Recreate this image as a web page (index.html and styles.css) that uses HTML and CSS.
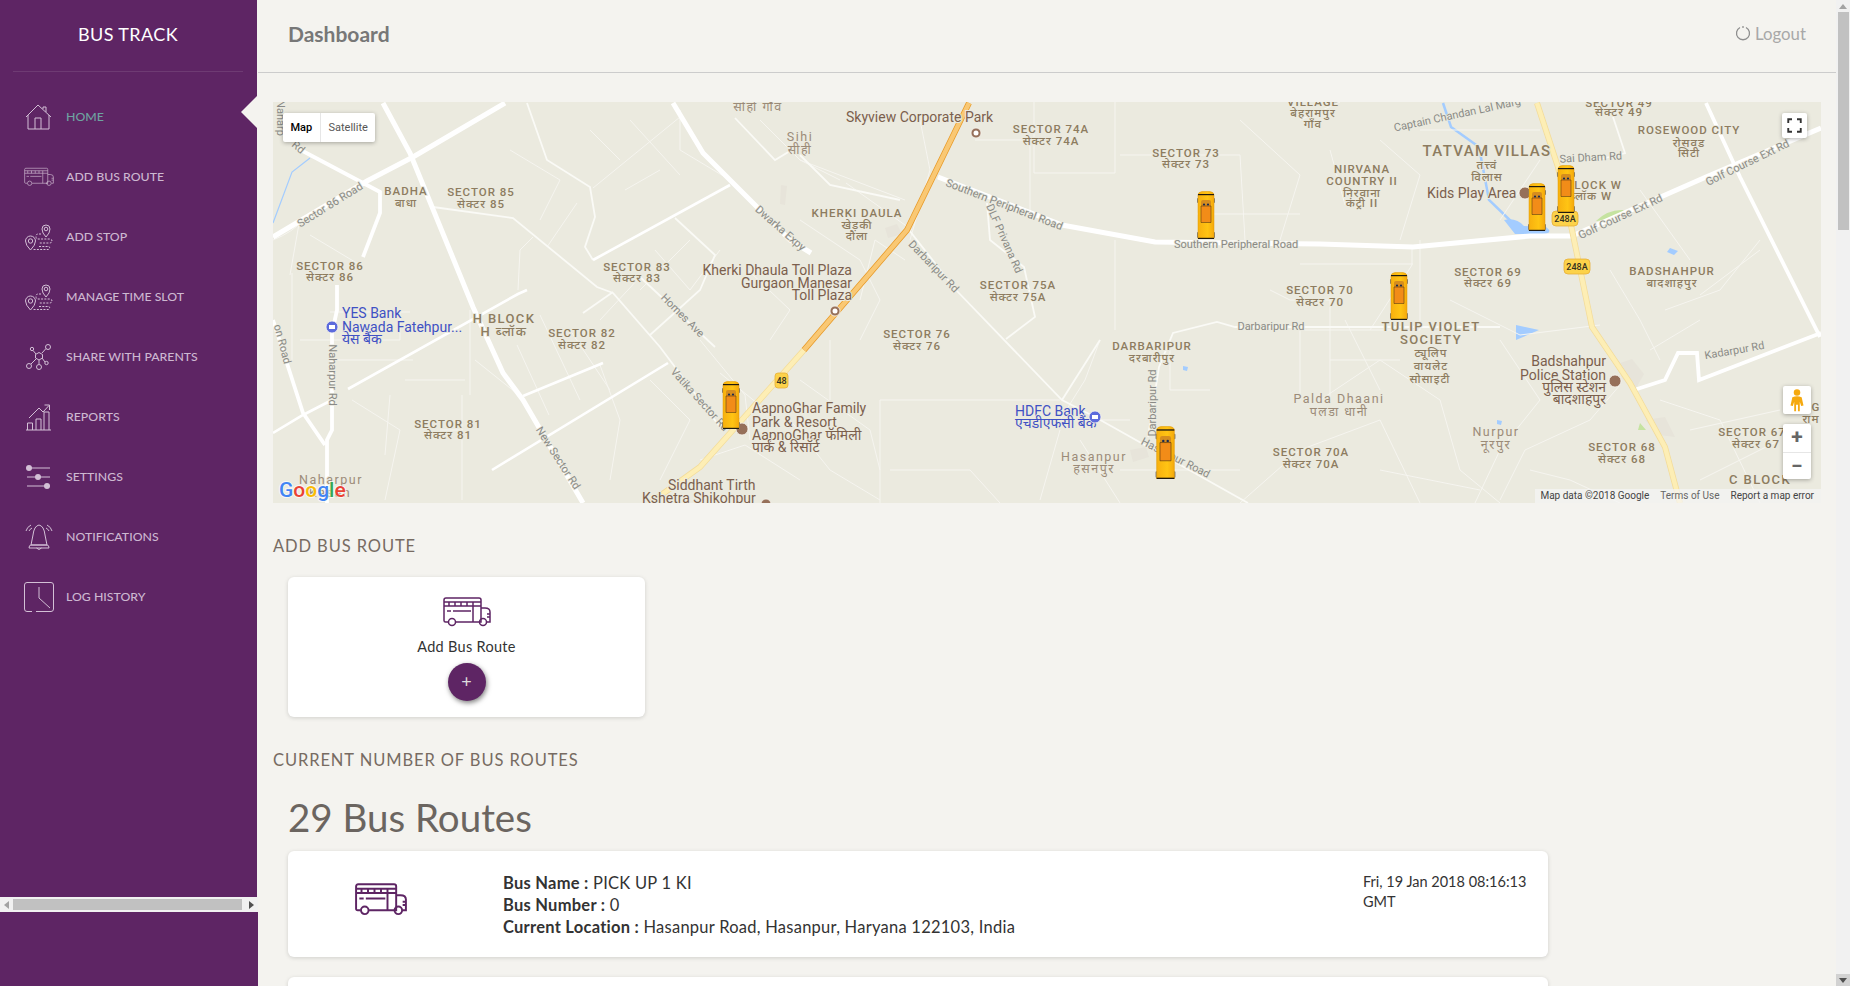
FILE: index.html
```html
<!DOCTYPE html>
<html>
	<head>
		<meta charset="utf-8">
		<title>Bus Track</title>
		<link rel="stylesheet" href="styles.css">
	</head>
	<body>
		<svg class="defs" width="0" height="0">
			<defs>
				<linearGradient id="bus-paint" x1="0" x2="1" y1="0" y2="0">
					<stop offset="0" stop-color="#f7b00f"/>
					<stop offset="0.6" stop-color="#ffc413"/>
					<stop offset="1" stop-color="#f5a90c"/>
				</linearGradient>
			</defs>
			<symbol id="ic-home" viewBox="0 0 30 30"><path d="M2 15 14 3l13 12M19 7V5h3v5M4 13v14h21V13M11 27V16h6v11"/></symbol>
			<symbol id="ic-bus" viewBox="0 0 48 30"><path d="M5 25H2.500Q1 25 1 23.500V3Q1 1 3 1h33q2 0 2 2v22H13M38 11h4q5 0 5 4v10h-3M35 25H38M1 5h37M6 5v4M12 5v4M18 5v4M24 5v4M30 5v4M1 9h37M4 14h4M10 14h18M30 9v16M44 17h3M44 20h3"/><circle cx="9" cy="25" r="3.500"/><circle cx="40" cy="25" r="3.500"/></symbol>
			<symbol id="ic-stop" viewBox="0 0 30 30"><path d="M22 15q-4-4-4-8a4 4 0 0 1 8 0q0 4-4 8zM6.500 28q-5-5-5-9a5 5 0 0 1 10 0q0 4-5 9z"/><circle cx="22" cy="7" r="1.800"/><circle cx="6.500" cy="19" r="2.200"/><path class="dash" d="M17 12h-3q-2 0-2 2.500t2 2.500h11q3 0 3 2t-3 2h-10M15 24.500h10q1.500 1-.5 3H9"/></symbol>
			<symbol id="ic-net" viewBox="0 0 30 30"><path d="M12 12 9 8.500M18 11l4-4.500M12 17l-5 5M15 18v4M18 16l3 4"/><path d="m15 10.500 3.500 2v3.500l-3.500 2-3.500-2v-3.500z"/><circle cx="24" cy="5" r="2.500"/><circle cx="5" cy="24" r="2.500"/><circle cx="15" cy="25" r="2.500"/><circle cx="8" cy="7" r="1.700"/><circle cx="22.500" cy="21" r="1.700"/></symbol>
			<symbol id="ic-chart" viewBox="0 0 30 30"><path d="M2 28h25M3.500 28v-7h5v7M12 28V17h5v11M20 28V10h5v18M5 16 15 6l4 4 6-6.500M20.500 3h5v5"/></symbol>
			<symbol id="ic-sliders" viewBox="0 0 30 30"><path d="M3 6h23M3 15h23M3 24h23"/><circle class="solid" cx="5" cy="6" r="3"/><circle class="solid" cx="14" cy="15" r="3"/><circle class="solid" cx="23" cy="24" r="3"/></symbol>
			<symbol id="ic-bell" viewBox="0 0 30 30"><path d="M15 3q-5 1-6 10l-2 10h16l-2-10q-1-9-6-10zM5 26q0-3 2-3h16q2 0 2 3zM12.500 26q2.500 3 5 0M2 9q1-4 5-6M5 9q1-2 3-3M28 9q-1-4-5-6M25 9q-1-2-3-3"/></symbol>
			<symbol id="ic-clock" viewBox="0 0 30 30"><path d="M8 29.500H3Q.5 29.500.5 27V3Q.5.5 3 .5h24q2.500 0 2.500 2.500v24q0 2.500-2.500 2.500H12M15 5v11l11 10"/></symbol>
			<symbol id="map-bus" viewBox="0 0 18 48">
				<rect class="b-wheel" x="0" y="7" width="18" height="5" rx="1"/>
				<rect class="b-wheel" x="0" y="41" width="18" height="6" rx="1"/>
				<path class="b-body" d="M1 4Q1 1 5 .5h8q4 .5 4 3.500v44H1z"/>
				<rect class="b-dark" x="1" y="3" width="16" height="1.200"/>
				<rect class="b-dark" x="1" y="46.800" width="16" height="1.200"/>
				<path class="b-cab" d="M4 11q0-2 2-2h6q2 0 2 2v6H4z"/>
				<path class="b-door" d="M4 15h10v16.500H4z"/>
				<circle class="b-eye" cx="7" cy="13.500" r="1.100"/>
				<circle class="b-eye" cx="11" cy="13.500" r="1.100"/>
			</symbol>
		</svg>

		<div class="app">
			<aside class="sidebar">
				<div class="sidebar-nav">
					<div class="brand">BUS TRACK</div>
					<ul class="nav">
						<li class="nav-item active"><svg class="nav-icon"><use href="#ic-home"/></svg><span>HOME</span></li>
						<li class="nav-item"><svg class="nav-icon"><use href="#ic-bus"/></svg><span>ADD BUS ROUTE</span></li>
						<li class="nav-item"><svg class="nav-icon"><use href="#ic-stop"/></svg><span>ADD STOP</span></li>
						<li class="nav-item"><svg class="nav-icon"><use href="#ic-stop"/></svg><span>MANAGE TIME SLOT</span></li>
						<li class="nav-item"><svg class="nav-icon"><use href="#ic-net"/></svg><span>SHARE WITH PARENTS</span></li>
						<li class="nav-item"><svg class="nav-icon"><use href="#ic-chart"/></svg><span>REPORTS</span></li>
						<li class="nav-item"><svg class="nav-icon"><use href="#ic-sliders"/></svg><span>SETTINGS</span></li>
						<li class="nav-item"><svg class="nav-icon"><use href="#ic-bell"/></svg><span>NOTIFICATIONS</span></li>
						<li class="nav-item"><svg class="nav-icon"><use href="#ic-clock"/></svg><span>LOG HISTORY</span></li>
					</ul>
				</div>
				<div class="hbar">
					<span class="hbar-btn"><i class="arr-left"></i></span>
					<span class="hbar-thumb"></span>
					<span class="hbar-btn"><i class="arr-right"></i></span>
				</div>
			</aside>

			<main class="main">
				<header class="topbar">
					<div class="page-title">Dashboard</div>
					<div class="logout">
						<svg class="logout-icon" viewBox="0 0 16 16"><path d="M5 2.500a6.500 6.500 0 1 0 6 0M8 1v2"/></svg>
						<span>Logout</span>
					</div>
				</header>

				<div class="content">
					<div class="map">
						<svg class="map-canvas" viewBox="273 102 1548 401">
							<!-- water and parks -->
							<path class="water" d="M310 158 292 172 273 223"/>
							<path class="water wide" d="M1443 103 1451 127 1479 147 1489 200 1517 227"/>
							<path class="lake" d="M1504 220q12-3 20 6l22 1q8 6-3 7h-28zM1516 325l23 5-23 10zM1670 248l8 3-4 4-7-3zM1497 420l5 1-1 4-4-1zM1183 366l5 1-1 4-4-1z"/>
							<path class="park" d="M1596 221q12-12 28-11l-10 9zM1640 423l6 7h-8z"/>
							<path class="urban" d="M1617 364l15-5 12 15-10 18-12-14zM1645 420l20-3 10 20-16-2zM781 185l6 1-2 19-5-1zM885 228l12-4 5 10-14 4zM1130 450l16-3 3 10-16 5z"/>

							<!-- thin roads -->
							<g class="road-thin">
								<path d="M593 188 680 117M547 247 577 203M518 290 520 250 533 237M273 240q20-8 30-20M300 218 290 275M310 235 360 265M292 273 292 360M300 340 400 340 400 310M333 360h80M405 380h60M330 312 410 312M352 400 400 430 385 500M390 395l-5 60M440 430h20M462 395V500M470 310V395M520 396 475 360M517 345l32 70M540 315l40 85M570 330l40 60M600 365 620 420 610 480M650 380 690 420 660 480M700 340 745 395 750 440M720 373 768 412M640 277 600 320M690 240 640 290M655 250 690 290 720 250M748 270 790 310 770 340M700 460 745 445 800 480M510 150 560 180 540 220M590 130 620 160M630 120 680 175M625 190 660 170M680 110 680 150 730 180M760 120 800 160 840 180M800 160 905 200M846 183 912 230M800 220 860 260 880 300 860 340M905 260 875 240 860 300M920 120 930 170 910 240M975 140H1030V220M1034 102V173H1115V102M1115 240V330M1120 155H1240L1245 240M1240 120 1300 175 1280 240M1197 214H1300M1300 120 1340 102M1330 150 1345 205M1380 140 1420 175 1400 240M1420 130H1540M1540 160 1500 220M1420 240V330H1300V400M1300 264H1413M1412 245V265L1370 330M1320 400 1380 360 1440 400 1460 470 1500 503M1450 300 1520 335 1600 325M1500 340 1540 400 1500 450 1475 503M1500 500 1525 450 1590 420 1620 385M1640 190 1690 260M1610 270 1640 320 1660 360M1665 310 1720 290 1760 240M1700 295 1760 250M1650 350 1700 320M1660 400 1720 420 1760 503M1690 430 1780 410M1620 503 1570 480 1530 470M1700 480 1780 440M1380 470 1480 490M1240 503 1300 450 1380 420 1420 503M1270 290 1290 300H1330V400M1330 360H1400M1345 320 1380 390M1170 350V390H1210M1100 340 1085 380 1060 420M1040 420H1130M920 400H1060M880 400V503M880 400H920M890 470H970L1000 503M1060 430 1040 500M1080 440 1120 503M1120 470H1240M800 380 870 430 880 470M790 420 830 470 880 500M830 340V400"/>
							</g>

							<!-- medium roads -->
							<g class="road-mid">
								<path d="M433 207 513 218 597 287 613 293 660 347 720 427M527 103 547 160 590 187 595 217 585 247 593 260M583 313 613 292M640 277 715 347M675 218 715 255 700 290 650 335M987 203 990 240 1024 267 1035 317 1006 339M909 230 956 290 1062 400 1095 417 1248 503M1148 437 1159 367 1173 333 1217 322 1235 327 1320 327M1062 400 1100 340M1613 117 1625 153 1597 160M1300 327H1500M800 155 830 185 900 200M735 118 775 160 795 148"/>
							</g>

							<!-- main roads -->
							<g class="road-main">
								<path d="M273 237 367 181 413 157 505 103"/>
								<path d="M383 103 410 153 473 307 503 373 523 400 583 503"/>
								<path class="w4" d="M297 148 380 192V213L363 257"/>
								<path class="w4" d="M337 285V310L332 333V430L327 440V503"/>
								<path class="w4" d="M273 320 303 413 325 445"/>
								<path class="w3" d="M273 433 303 415 332 400"/>
								<path class="w3" d="M348 389 518 294 527 290"/>
								<path class="w3" d="M523 396 603 363"/>
								<path class="w3" d="M492 470 668 363"/>
								<path d="M673 103 703 153 753 203 790 240 811 253"/>
								<path class="w3" d="M593 260 730 185"/>
								<path d="M938 177 1062 225 1155 242 1320 244 1413 247 1530 236 1572 236 1706 177 1821 128"/>
								<path class="w4" d="M1706 103 1740 177 1820 337"/>
								<path class="w4" d="M1821 333 1699 380 1697 353H1678L1665 380 1634 390"/>
							</g>

							<!-- highways -->
							<path class="hw-edge" d="M650 503 700 467 804 350"/>
							<path class="hw" d="M650 503 700 467 804 350"/>
							<path class="toll-edge" d="M804 350 907 230 969 103"/>
							<path class="toll" d="M804 350 907 230 969 103"/>
							<path class="hw-edge" d="M1537 103 1558 167 1572 230 1592 327 1630 383 1665 447 1680 503"/>
							<path class="hw" d="M1537 103 1558 167 1572 230 1592 327 1630 383 1665 447 1680 503"/>

							<!-- road names -->
							<g class="t-road">
								<text x="778" y="231" transform="rotate(41 778 231)">Dwarka Expy</text>
								<text x="680" y="318" transform="rotate(45 680 318)">Homes Ave</text>
								<text x="697" y="402" transform="rotate(48 697 402)">Vatika Sector Rd</text>
								<text x="555" y="460" transform="rotate(57 555 460)">New Sector Rd</text>
								<text x="332" y="208" transform="rotate(-32 332 208)">Sector 86 Road</text>
								<text x="329" y="375" transform="rotate(90 329 375)">Naharpur Rd</text>
								<text x="277" y="118" transform="rotate(90 277 118)">Naharp</text>
								<text x="296" y="150" transform="rotate(40 296 150)">Rd</text>
								<text x="279" y="345" transform="rotate(75 279 345)">on Road</text>
								<text x="1003" y="208" transform="rotate(21 1003 208)">Southern Peripheral Road</text>
								<text x="1001" y="240" transform="rotate(66 1001 240)">DLF Privana Rd</text>
								<text x="931" y="269" transform="rotate(46 931 269)">Darbaripur Rd</text>
								<text x="1236" y="248">Southern Peripheral Road</text>
								<text x="1271" y="330">Darbaripur Rd</text>
								<text x="1156" y="403" transform="rotate(-90 1156 403)">Darbaripur Rd</text>
								<text x="1174" y="461" transform="rotate(27 1174 461)">Hasanpur Road</text>
								<text x="1458" y="118" transform="rotate(-12 1458 118)">Captain Chandan Lal Marg</text>
								<text x="1591" y="161" transform="rotate(-3 1591 161)">Sai Dham Rd</text>
								<text x="1622" y="220" transform="rotate(-25 1622 220)">Golf Course Ext Rd</text>
								<text x="1749" y="166" transform="rotate(-26 1749 166)">Golf Course Ext Rd</text>
								<text x="1735" y="354" transform="rotate(-10 1735 354)">Kadarpur Rd</text>
							</g>

							<!-- areas -->
							<g class="t-area">
								<text x="406" y="195">BADHA</text><text x="406" y="207">बाधा</text>
								<text x="481" y="196">SECTOR 85</text><text x="481" y="208">सेक्टर 85</text>
								<text x="330" y="270">SECTOR 86</text><text x="330" y="281">सेक्टर 86</text>
								<text class="mid" x="504" y="323">H BLOCK</text><text class="mid" x="504" y="336">H ब्लॉक</text>
								<text x="582" y="337">SECTOR 82</text><text x="582" y="349">सेक्टर 82</text>
								<text x="637" y="271">SECTOR 83</text><text x="637" y="282">सेक्टर 83</text>
								<text x="448" y="428">SECTOR 81</text><text x="448" y="439">सेक्टर 81</text>
								<text x="1051" y="133">SECTOR 74A</text><text x="1051" y="145">सेक्टर 74A</text>
								<text x="1186" y="157">SECTOR 73</text><text x="1186" y="168">सेक्टर 73</text>
								<text x="857" y="217">KHERKI DAULA</text><text x="857" y="229">खेड़की</text><text x="857" y="240">दौला</text>
								<text x="1018" y="289">SECTOR 75A</text><text x="1018" y="301">सेक्टर 75A</text>
								<text x="917" y="338">SECTOR 76</text><text x="917" y="350">सेक्टर 76</text>
								<text x="1152" y="350">DARBARIPUR</text><text x="1152" y="362">दरबारीपुर</text>
								<text x="1320" y="294">SECTOR 70</text><text x="1320" y="306">सेक्टर 70</text>
								<text x="1311" y="456">SECTOR 70A</text><text x="1311" y="468">सेक्टर 70A</text>
								<text x="1313" y="106">VILLAGE</text><text x="1313" y="117">बेहरामपुर</text><text x="1313" y="128">गाँव</text>
								<text x="1619" y="107">SECTOR 49</text><text x="1619" y="116">सेक्टर 49</text>
								<text x="1689" y="134">ROSEWOOD CITY</text><text x="1689" y="147">रोसवड</text><text x="1689" y="157">सिटी</text>
								<text class="big" x="1487" y="156">TATVAM VILLAS</text><text x="1487" y="169">तत्त्वं</text><text x="1487" y="181">विलास</text>
								<text x="1362" y="173">NIRVANA</text><text x="1362" y="185">COUNTRY II</text><text x="1362" y="197">निरवाना</text><text x="1362" y="207">कंट्री II</text>
								<text x="1594" y="189">BLOCK W</text><text x="1591" y="200">ब्लॉक W</text>
								<text x="1488" y="276">SECTOR 69</text><text x="1488" y="287">सेक्टर 69</text>
								<text x="1672" y="275">BADSHAHPUR</text><text x="1672" y="287">बादशाहपुर</text>
								<text class="mid" x="1431" y="331">TULIP VIOLET</text><text class="mid" x="1431" y="344">SOCIETY</text><text x="1431" y="357">ट्यूलिप</text><text x="1431" y="370">वायलेट</text><text x="1430" y="383">सोसाइटी</text>
								<text x="1622" y="451">SECTOR 68</text><text x="1622" y="463">सेक्टर 68</text>
								<text x="1752" y="436">SECTOR 67</text><text x="1756" y="448">सेक्टर 67</text>
								<text class="mid" x="1760" y="484">C BLOCK</text>
							</g>

							<!-- villages -->
							<g class="t-village">
								<text x="800" y="141">Sihi</text><text x="800" y="154">सीही</text>
								<text x="758" y="111">सोहों गाँव</text>
								<text x="331" y="484">Naharpur</text><text x="330" y="497">Kasan</text>
								<text x="1094" y="461">Hasanpur</text><text x="1094" y="473">हसनपुर</text>
								<text x="1339" y="403">Palda Dhaani</text><text x="1339" y="416">पलडा धानी</text>
								<text x="1496" y="436">Nurpur</text><text x="1496" y="449">नूरपुर</text>
							</g>

							<!-- places -->
							<g class="t-poi">
								<text x="846" y="122">Skyview Corporate Park</text>
								<text class="end" x="852" y="275">Kherki Dhaula Toll Plaza</text>
								<text class="end" x="852" y="288">Gurgaon Manesar</text>
								<text class="end" x="852" y="300">Toll Plaza</text>
								<text x="752" y="413">AapnoGhar Family</text>
								<text x="752" y="427">Park &amp; Resort</text>
								<text x="752" y="440">AapnoGhar फॅमिली</text>
								<text x="752" y="452">पार्क &amp; रिसॉर्ट</text>
								<text x="668" y="490">Siddhant Tirth</text>
								<text x="642" y="503">Kshetra Shikohpur</text>
								<text x="1427" y="198">Kids Play Area</text>
								<text class="end" x="1606" y="366">Badshahpur</text>
								<text class="end" x="1606" y="380">Police Station</text>
								<text class="end" x="1606" y="392">पुलिस स्टेशन</text>
								<text class="end" x="1606" y="404">बादशाहपुर</text>
							</g>
							<g class="t-bank">
								<text x="342" y="318">YES Bank</text>
								<text x="342" y="332">Nawada Fatehpur...</text>
								<text x="342" y="344">येस बैंक</text>
								<text x="1015" y="416">HDFC Bank</text>
								<text x="1015" y="428">एचडीएफसी बैंक</text>
							</g>
							<text class="t-area" x="1816" y="411">G</text>
							<text class="t-area" x="1811" y="423">राम</text>

							<!-- markers -->
							<g class="poi"><circle cx="976" cy="133" r="5"/><circle class="hole" cx="976" cy="133" r="2.500"/><circle cx="835" cy="311" r="5"/><circle class="hole" cx="835" cy="311" r="2.500"/><circle cx="742" cy="429" r="6"/><circle cx="766" cy="504" r="5"/><circle cx="1525" cy="193" r="6"/><circle cx="1615" cy="381" r="6"/></g>
							<g class="bank"><circle cx="332" cy="327" r="6"/><rect class="hole" x="329" y="325" width="6" height="4"/><circle cx="1095" cy="417" r="6"/><rect class="hole" x="1092" y="415" width="6" height="4"/></g>
							<g class="shield">
								<rect x="775" y="373" width="13" height="15" rx="3"/><text x="781.500" y="384">48</text>
								<rect x="1552" y="211" width="26" height="15" rx="4"/><text x="1565" y="222">248A</text>
								<rect x="1564" y="259" width="26" height="15" rx="4"/><text x="1577" y="270">248A</text>
							</g>

							<!-- buses -->
							<use href="#map-bus" x="722" y="381" width="18" height="48"/>
							<use href="#map-bus" x="1197" y="191" width="18" height="48"/>
							<use href="#map-bus" x="1155" y="426" width="21" height="53"/>
							<use href="#map-bus" x="1390" y="272" width="18" height="48"/>
							<use href="#map-bus" x="1528" y="183" width="18" height="48"/>
							<use href="#map-bus" x="1557" y="165" width="18" height="48"/>

							<text class="g-logo" x="279" y="497"><tspan class="g-b">G</tspan><tspan class="g-r">o</tspan><tspan class="g-y">o</tspan><tspan class="g-b">g</tspan><tspan class="g-g">l</tspan><tspan class="g-r">e</tspan></text>
						</svg>

						<div class="map-type">
							<span class="map-type-on">Map</span>
							<span>Satellite</span>
						</div>
						<div class="map-btn map-full">
							<svg viewBox="0 0 24 24"><path d="M2 8V2h6M16 2h6v6M22 16v6h-6M8 22H2v-6"/></svg>
						</div>
						<div class="map-btn map-peg">
							<svg viewBox="0 0 28 28"><circle cx="14" cy="6" r="3.500"/><path d="M9 11q5-2 10 0l2 9-2.500.5L17 16v10h-2v-7h-2v7h-2V16l-1.500 4.500L7 20z"/></svg>
						</div>
						<div class="map-zoom">
							<div class="zoom-btn">+</div>
							<div class="zoom-btn">−</div>
						</div>
						<div class="map-foot">
							<span>Map data ©2018 Google</span>
							<span class="foot-link">Terms of Use</span>
							<span>Report a map error</span>
						</div>
					</div>

					<h2 class="sec-title add-title">ADD BUS ROUTE</h2>
					<div class="add-card">
						<svg class="bus-icon"><use href="#ic-bus"/></svg>
						<div class="add-label">Add Bus Route</div>
						<div class="add-btn">+</div>
					</div>

					<h2 class="sec-title count-title">CURRENT NUMBER OF BUS ROUTES</h2>
					<div class="count">29 Bus Routes</div>

					<div class="route-list">
						<div class="route-card">
							<svg class="route-icon"><use href="#ic-bus"/></svg>
							<div class="route-info">
								<div><b>Bus Name :</b> PICK UP 1 KI</div>
								<div><b>Bus Number :</b> 0</div>
								<div><b>Current Location :</b> Hasanpur Road, Hasanpur, Haryana 122103, India</div>
							</div>
							<div class="route-date">Fri, 19 Jan 2018 08:16:13 GMT</div>
						</div>
						<div class="route-card"></div>
					</div>
				</div>
			</main>

			<div class="vbar">
				<span class="vbar-btn"><i class="arr-up"></i></span>
				<span class="vbar-thumb"></span>
				<span class="vbar-btn vbar-down"><i class="arr-down"></i></span>
			</div>
		</div>
	</body>
</html>
```

FILE: styles.css
```css
*{
	padding: 0;
	margin: 0;
	box-sizing: border-box;
}
html,body{
	height: 100%;
	overflow: hidden;
}
body{
	font-family: "Lato", "Noto Sans", sans-serif;
	background-color: #f4f3ef;
	color: #333;
}
.defs{
	position: absolute;
}
.app{
	display: flex;
	height: 100vh;
}

/* sidebar */
.sidebar{
	display: flex;
	flex-direction: column;
	flex: 0 0 258px;
	padding-bottom: 74px;
	background-color: #5e2564;
}
.sidebar-nav{
	flex: 1;
	border-right: 1px solid #f4f3ef;
}
.brand{
	width: 230px;
	height: 72px;
	margin-left: 13px;
	border-bottom: 1px solid rgba(255,255,255,0.1);
	color: #fff;
	font-size: 18px;
	letter-spacing: 0.4px;
	line-height: 68px;
	text-align: center;
}
.nav{
	list-style-type: none;
	padding-top: 15px;
}
.nav-item{
	position: relative;
	display: flex;
	align-items: center;
	gap: 12px;
	height: 60px;
	padding-left: 24px;
	color: #cdb8d1;
	font-size: 12.300px;
	font-weight: 500;
}
.nav-item span{
	margin-bottom: 2px;
}
.nav-item.active{
	color: #6ea3a1;
}
.nav-item.active:after{
	content: "";
	position: absolute;
	right: 0;
	top: 9px;
	border-style: solid;
	border-width: 16px 16px 16px 0;
	border-color: transparent #f4f3ef transparent transparent;
}
.nav-icon{
	flex: none;
	width: 30px;
	height: 30px;
	fill: none;
	stroke: #d3c0d6;
	stroke-width: 1;
}
.dash{
	stroke-dasharray: 2 1.3;
}
.solid{
	fill: #d3c0d6;
	stroke: none;
}

/* scrollbars */
.hbar{
	display: flex;
	align-items: center;
	height: 15px;
	background-color: #f1f1f1;
}
.hbar-btn{
	display: flex;
	align-items: center;
	justify-content: center;
	flex: 0 0 13px;
	height: 15px;
}
.hbar-thumb{
	flex: 1;
	height: 11px;
	margin-right: 3px;
	background-color: #c1c1c1;
}
.vbar{
	display: flex;
	flex-direction: column;
	flex: 0 0 14px;
	background-color: #f1f1f1;
}
.vbar-btn{
	display: flex;
	align-items: center;
	justify-content: center;
	height: 12px;
}
.vbar-thumb{
	height: 218px;
	margin: 0 1px 0 2px;
	background-color: #c1c1c1;
}
.vbar-down{
	margin-top: auto;
	background-color: #d2d2d2;
}
.arr-left,
.arr-right,
.arr-up,
.arr-down{
	display: block;
	border-style: solid;
	border-color: transparent;
}
.arr-left{
	border-width: 4px 5px 4px 0;
	border-right-color: #a3a3a3;
}
.arr-right{
	border-width: 4px 0 4px 5px;
	border-left-color: #505050;
}
.arr-up{
	border-width: 0 4px 5px 4px;
	border-bottom-color: #a3a3a3;
}
.arr-down{
	border-width: 5px 4px 0 4px;
	border-top-color: #505050;
}

/* main column */
.main{
	flex: 1;
	min-width: 0;
	height: 100vh;
	overflow: hidden;
}
.topbar{
	display: flex;
	align-items: center;
	justify-content: space-between;
	height: 73px;
	padding: 0 30px 6px 30px;
	border-bottom: 1px solid #ccc;
}
.page-title{
	font-size: 21px;
	font-weight: 700;
	color: #777;
}
.logout{
	display: flex;
	align-items: center;
	gap: 4px;
	font-size: 16.800px;
	color: #a8a8a8;
}
.logout-icon{
	width: 16px;
	height: 16px;
	fill: none;
	stroke: #8f8f8f;
	stroke-width: 1.300;
}
.content{
	padding: 29px 15px 0;
}

/* map */
.map{
	position: relative;
	height: 401px;
	overflow: hidden;
	background-color: #ebeadf;
}
.map-canvas{
	display: block;
	width: 100%;
	height: 100%;
	font-family: "Roboto", "Noto Sans", sans-serif;
}
.water{
	fill: none;
	stroke: #a3ccff;
	stroke-width: 1.200;
}
.water.wide{
	stroke-width: 2.500;
}
.lake{
	fill: #a3ccff;
}
.park{
	fill: #c5e3a0;
}
.urban{
	fill: #e7e4da;
}
.road-thin path{
	fill: none;
	stroke: #f6f5f0;
	stroke-width: 1;
}
.road-mid path{
	fill: none;
	stroke: #fafaf6;
	stroke-width: 1.800;
}
.road-main path{
	fill: none;
	stroke: #fff;
	stroke-width: 5;
}
.road-main .w4{
	stroke-width: 3.800;
}
.road-main .w3{
	stroke-width: 2.600;
}
.hw-edge{
	fill: none;
	stroke: #f3dc9a;
	stroke-width: 6;
}
.hw{
	fill: none;
	stroke: #fdeeb5;
	stroke-width: 4.500;
}
.toll-edge{
	fill: none;
	stroke: #e89a27;
	stroke-width: 6;
}
.toll{
	fill: none;
	stroke: #f9c874;
	stroke-width: 4.500;
}
.t-road text{
	font-size: 11px;
	fill: #8a8a86;
	text-anchor: middle;
	paint-order: stroke;
	stroke: #ebeadf;
	stroke-width: 1.500;
}
.t-area,
.t-area text{
	font-size: 11.500px;
	font-weight: 500;
	letter-spacing: 1px;
	fill: #8d7c60;
	text-anchor: middle;
	paint-order: stroke;
	stroke: #ebeadf;
	stroke-width: 2;
}
.t-area .mid{
	font-size: 13px;
	letter-spacing: 1.400px;
}
.t-area .big{
	font-size: 15px;
	letter-spacing: 1.300px;
}
.t-village text{
	font-size: 12.500px;
	letter-spacing: 1.500px;
	fill: #9b8b78;
	text-anchor: middle;
	paint-order: stroke;
	stroke: #ebeadf;
	stroke-width: 2;
}
.t-poi text{
	font-size: 14px;
	fill: #7b5f4d;
	paint-order: stroke;
	stroke: #ebeadf;
	stroke-width: 2;
}
.t-poi .end{
	text-anchor: end;
}
.t-bank text{
	font-size: 14px;
	fill: #3f51c4;
	paint-order: stroke;
	stroke: #ebeadf;
	stroke-width: 2;
}
.poi circle{
	fill: #96705a;
	stroke: #f7f5ef;
	stroke-width: 0.800;
}
.bank circle{
	fill: #5c6bdc;
	stroke: #f7f5ef;
	stroke-width: 0.800;
}
.poi .hole,
.bank .hole{
	fill: #fff;
	stroke: none;
}
.shield rect{
	fill: #fcd24a;
	stroke: #e7b03a;
	stroke-width: 0.800;
}
.shield text{
	font-size: 9px;
	font-weight: 500;
	fill: #33301f;
	text-anchor: middle;
}
.b-wheel{
	fill: #777;
}
.b-body{
	fill: url(#bus-paint);
	stroke: #e09a00;
	stroke-width: 0.500;
}
.b-dark{
	fill: #1f1a10;
}
.b-cab{
	fill: #d68d1e;
}
.b-door{
	fill: #f28c18;
	stroke: #3c2a10;
	stroke-width: 0.500;
}
.b-eye{
	fill: #1a2a55;
}
.g-logo{
	font-size: 21px;
	font-weight: 500;
	paint-order: stroke;
	stroke: rgba(255,255,255,0.7);
	stroke-width: 2;
}
.g-b{ fill: #4285f4; }
.g-r{ fill: #ea4335; }
.g-y{ fill: #fbbc05; }
.g-g{ fill: #34a853; }

.map-type{
	position: absolute;
	left: 10px;
	top: 11px;
	display: flex;
	height: 29px;
	background-color: #fff;
	border-radius: 2px;
	box-shadow: 0 1px 4px rgba(0,0,0,0.3);
	font-family: "Roboto", sans-serif;
	font-size: 11px;
	line-height: 29px;
	color: #565656;
}
.map-type span{
	padding: 0 7.500px;
}
.map-type .map-type-on{
	width: 38px;
	border-right: 1px solid #e6e6e6;
	color: #000;
	font-weight: 500;
}
.map-btn{
	position: absolute;
	display: flex;
	align-items: center;
	justify-content: center;
	background-color: #fff;
	box-shadow: 0 1px 4px rgba(0,0,0,0.3);
}
.map-full{
	left: 1509px;
	top: 11px;
	width: 25px;
	height: 25px;
	border-radius: 2px;
}
.map-full svg{
	width: 15px;
	height: 15px;
	fill: none;
	stroke: #333;
	stroke-width: 3;
}
.map-peg{
	left: 1510px;
	top: 284px;
	width: 28px;
	height: 28px;
	border-radius: 2px;
}
.map-peg svg{
	width: 26px;
	height: 26px;
	fill: #f5a90f;
}
.map-zoom{
	position: absolute;
	left: 1510px;
	top: 322px;
	width: 28px;
	height: 55px;
	background-color: #fff;
	border-radius: 2px;
	box-shadow: 0 1px 4px rgba(0,0,0,0.3);
}
.zoom-btn{
	height: 27.500px;
	font-family: "Roboto", sans-serif;
	font-size: 21px;
	font-weight: 700;
	line-height: 26px;
	text-align: center;
	color: #666;
}
.zoom-btn + .zoom-btn{
	border-top: 1px solid #e6e6e6;
}
.map-foot{
	position: absolute;
	right: 0;
	bottom: 0;
	display: flex;
	gap: 11px;
	height: 14px;
	padding: 0 7px 0 5px;
	background-color: rgba(245,245,245,0.7);
	font-family: "Roboto", sans-serif;
	font-size: 10px;
	line-height: 14px;
	color: #444;
}
.foot-link{
	color: #666;
}

/* add card */
.sec-title{
	font-size: 16.500px;
	font-weight: 400;
	letter-spacing: 0.9px;
	color: #776b62;
}
.add-title{
	margin-top: 33px;
	line-height: 20px;
}
.add-card{
	display: flex;
	flex-direction: column;
	align-items: center;
	width: 357px;
	height: 140px;
	margin: 21px 0 0 15px;
	padding-top: 20px;
	background-color: #fff;
	border-radius: 6px;
	box-shadow: 0 1px 4px rgba(0,0,0,0.15);
}
.bus-icon{
	width: 48px;
	height: 30px;
	fill: none;
	stroke: #5e2564;
	stroke-width: 1.500;
}
.add-label{
	margin-top: 10px;
	font-size: 14.500px;
	letter-spacing: 0.3px;
	line-height: 20px;
	color: #333;
}
.add-btn{
	width: 38px;
	height: 38px;
	margin-top: 6px;
	background-color: #5e2564;
	border-radius: 50%;
	box-shadow: 1px 2px 5px rgba(0,0,0,0.5);
	font-size: 18px;
	line-height: 36px;
	text-align: center;
	color: #ddd;
}
.count-title{
	margin-top: 33px;
	line-height: 20px;
}
.count{
	margin: 22px 0 0 15px;
	font-size: 38.500px;
	line-height: 50px;
	color: #6b6560;
}

/* route list */
.route-list{
	margin: 9px 0 0 15px;
}
.route-card{
	display: grid;
	grid-template-columns: 215px 860px 1fr;
	width: 1260px;
	height: 106px;
	margin-bottom: 20px;
	padding-top: 21px;
	background-color: #fff;
	border-radius: 6px;
	box-shadow: 0 1px 4px rgba(0,0,0,0.15);
}
.route-icon{
	width: 52px;
	height: 33px;
	margin: 11px 0 0 67px;
	fill: none;
	stroke: #5e2564;
	stroke-width: 1.800;
}
.route-info{
	font-size: 16.500px;
	letter-spacing: 0.25px;
	line-height: 22px;
	color: #333;
}
.route-date{
	padding-right: 15px;
	font-size: 14.500px;
	line-height: 20px;
	color: #333;
}
```
